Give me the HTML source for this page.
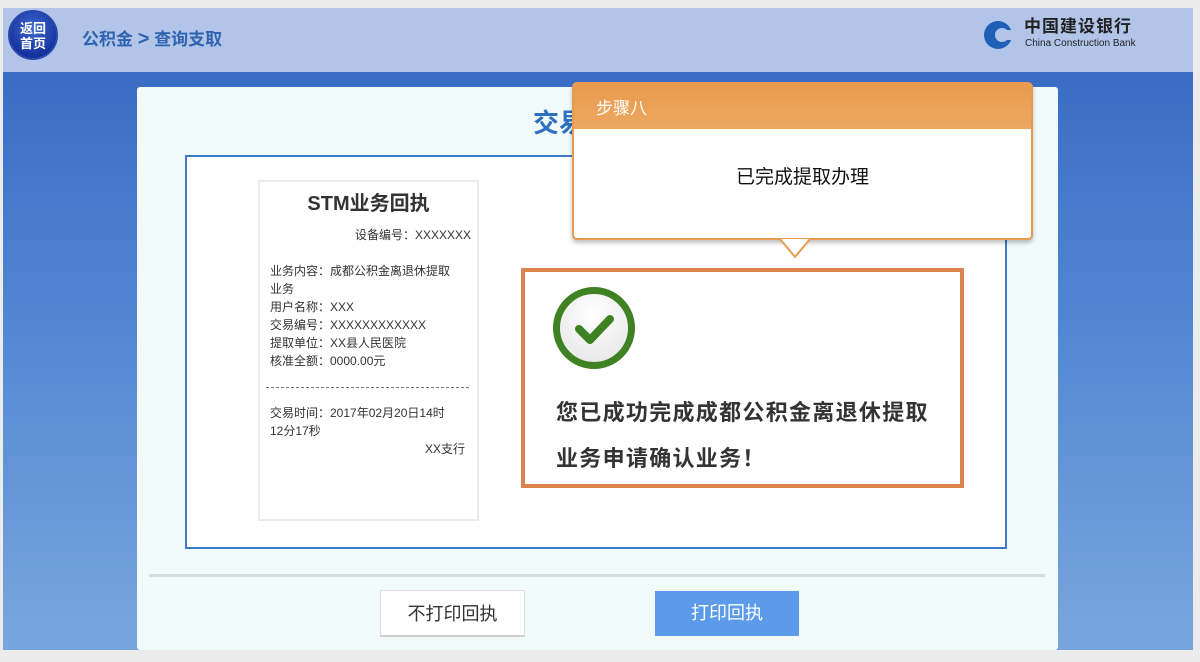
<!DOCTYPE html><html><head><meta charset="utf-8"><style>
*{margin:0;padding:0;box-sizing:border-box}
body{width:1200px;height:662px;overflow:hidden;background:#ececec;font-family:"Liberation Sans","Noto Sans CJK SC",sans-serif;position:relative}
.abs{position:absolute}
</style></head><body>
<div class="abs" style="left:3px;top:8px;width:1190px;height:64px;background:#b2c5e8"></div>
<div class="abs" style="left:3px;top:72px;width:1190px;height:578px;background:linear-gradient(180deg,#3b6cc4 0%,#4f85d2 40%,#79a6dd 100%)"></div>
<div class="abs" style="left:8px;top:10px;width:50px;height:50px;border-radius:50%;background:radial-gradient(circle at 50% 35%,#3d6ad0,#14309a 75%);border:2px solid #2a49b0;color:#fff;font-size:13px;font-weight:bold;line-height:15px;text-align:center;padding-top:9px">返回<br>首页</div>
<div class="abs" style="left:82px;top:25px;color:#2e63b0;font-size:17px;font-weight:bold">公积金 <span style="font-size:20px">&gt;</span> 查询支取</div>
<svg class="abs" style="left:980px;top:18px" width="36" height="34" viewBox="0 0 36 34"><circle cx="18" cy="17" r="14" fill="#1f5fb5"/><circle cx="22" cy="17" r="7" fill="#b2c5e8"/><rect x="20" y="12" width="16" height="10" fill="#b2c5e8"/></svg>
<div class="abs" style="left:1024px;top:17px;color:#222;font-size:17px;font-weight:bold;letter-spacing:1px;line-height:20px">中国建设银行</div>
<div class="abs" style="left:1025px;top:38px;color:#222;font-size:10px;line-height:11px">China Construction Bank</div>
<div class="abs" style="left:137px;top:87px;width:921px;height:563px;background:#f1fbfb;border-radius:3px"></div>
<div class="abs" style="left:533px;top:103px;color:#2e6fbf;font-size:26px;font-weight:bold">交易</div>
<div class="abs" style="left:185px;top:155px;width:822px;height:394px;background:#fff;border:2px solid #3b7bcb"></div>
<div class="abs" style="left:258px;top:180px;width:221px;height:341px;background:#fff;border:2px solid #ececec;font-size:12px;color:#333;line-height:18px">
<div style="text-align:center;font-size:20px;font-weight:bold;margin-top:10px;line-height:24px">STM业务回执</div>
<div style="text-align:right;padding-right:6px;margin-top:10px">设备编号：XXXXXXX</div>
<div style="padding:0 10px 0 10px;margin-top:18px;width:212px">业务内容：成都公积金离退休提取<br>业务<br>用户名称：XXX<br>交易编号：XXXXXXXXXXXX<br>提取单位：XX县人民医院<br>核准全额：0000.00元</div>
<div style="border-top:1px dashed #777;margin:17px 8px 0 6px"></div>
<div style="padding:0 6px 0 10px;margin-top:16px">交易时间：2017年02月20日14时<br>12分17秒</div>
<div style="text-align:right;padding-right:12px">XX支行</div>
</div>
<div class="abs" style="left:521px;top:268px;width:443px;height:220px;border:4px solid #db8450;background:#fff"></div>
<div class="abs" style="left:553px;top:287px;width:82px;height:82px;border-radius:50%;border:7px solid #3e8224;background:radial-gradient(circle at 50% 30%,#fff,#e4e4e4)"></div>
<svg class="abs" style="left:553px;top:287px" width="82" height="82"><path d="M26 42 L37 53 L57 32" stroke="#3e8224" stroke-width="8" fill="none" stroke-linecap="round" stroke-linejoin="round"/></svg>
<div class="abs" style="left:556px;top:390px;font-size:22px;font-weight:bold;color:#333;line-height:46px;letter-spacing:1.3px">您已成功完成成都公积金离退休提取<br>业务申请确认业务！</div>
<div class="abs" style="left:572px;top:82px;width:461px;height:158px;background:#fff;border:2px solid #e89a50;border-radius:5px;box-shadow:0 3px 4px rgba(0,0,0,.25);overflow:hidden">
<div style="height:45px;background:linear-gradient(180deg,#e89a4e,#eea862);color:#fff;font-size:17px;padding:15px 0 0 22px;line-height:20px">步骤八</div>
<div style="text-align:center;font-size:19px;color:#111;margin-top:33px">已完成提取办理</div>
</div>
<svg class="abs" style="left:780px;top:238px" width="32" height="22"><path d="M0 1 L15 19 L30 1" fill="#fff" stroke="#e89a50" stroke-width="2"/></svg>
<div class="abs" style="left:149px;top:574px;width:896px;height:3px;background:#d5dede"></div>
<div class="abs" style="left:380px;top:590px;width:145px;height:47px;background:#fff;border:1px solid #ddd;border-bottom:2px solid #ccc;font-size:18px;color:#333;text-align:center;line-height:46px">不打印回执</div>
<div class="abs" style="left:655px;top:591px;width:144px;height:45px;background:#5b9be9;font-size:18px;color:#fff;text-align:center;line-height:45px">打印回执</div>
</body></html>
